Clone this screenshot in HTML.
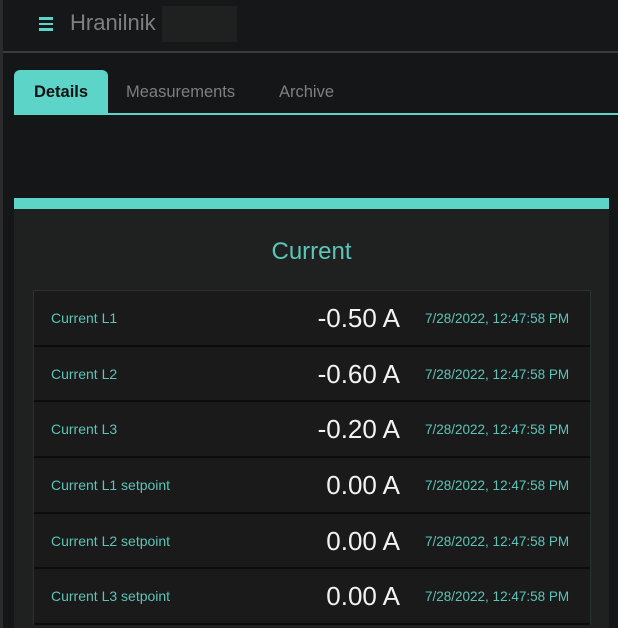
<!DOCTYPE html>
<html><head><style>
*{margin:0;padding:0;box-sizing:border-box}
html,body{width:618px;height:628px;overflow:hidden}
body{background:#151617;font-family:"Liberation Sans",sans-serif;position:relative}
.lb{position:absolute;left:0;top:0;width:3px;height:628px;background:#2a2b2c}
.hdr{position:absolute;left:3px;top:0;right:0;height:53px;background:#161718;border-bottom:2px solid #3a3b3c}
.ham{position:absolute;left:36px;top:17px;width:14px}
.ham i{display:block;height:2.5px;background:#5cd4c8;margin-bottom:3px}
.ttl{position:absolute;left:67px;top:10px;font-size:22px;color:#7d7f80}
.blur{position:absolute;left:159px;top:6px;width:75px;height:36px;background:#1f2020}
.tabs{position:absolute;left:14px;top:70px;right:0;height:45px;border-bottom:2px solid #5cd4c8}
.tab{position:absolute;top:0;height:43px;line-height:45px;font-size:16.5px;color:#7d7f80}
.act{left:0;width:94px;background:#5cd4c8;color:#111;font-weight:bold;text-align:center;border-radius:6px 6px 0 0}
.card{position:absolute;left:14px;top:198px;width:595px;height:430px;background:#1f2120;border-top:11px solid #5cd4c8}
.h{position:absolute;left:0;right:0;top:29px;text-align:center;font-size:24px;color:#5cc4b8}
.tbl{position:absolute;left:19px;top:81px;width:558px;border:1px solid #2b3331;border-bottom:none}
.r{height:55.7px;background:#1a1a1a;border-bottom:2px solid #0c0c0c;position:relative}
.l{position:absolute;left:17px;top:19px;font-size:14px;color:#5cc4b8}
.v{position:absolute;right:190px;top:12px;font-size:26px;color:#f2f2f2}
.d{position:absolute;left:391px;top:20px;font-size:13.5px;color:#5cc4b8}
</style></head><body>
<div class="lb"></div>
<div class="hdr"><div class="ham"><i></i><i></i><i></i></div><div class="ttl">Hranilnik</div><div class="blur"></div></div>
<div class="tabs"><div class="tab act">Details</div><div class="tab" style="left:112px">Measurements</div><div class="tab" style="left:265px">Archive</div></div>
<div class="card"><div class="h">Current</div>
<div class="tbl">
<div class="r"><span class="l">Current L1</span><span class="v">-0.50 A</span><span class="d">7/28/2022, 12:47:58 PM</span></div>
<div class="r"><span class="l">Current L2</span><span class="v">-0.60 A</span><span class="d">7/28/2022, 12:47:58 PM</span></div>
<div class="r"><span class="l">Current L3</span><span class="v">-0.20 A</span><span class="d">7/28/2022, 12:47:58 PM</span></div>
<div class="r"><span class="l">Current L1 setpoint</span><span class="v">0.00 A</span><span class="d">7/28/2022, 12:47:58 PM</span></div>
<div class="r"><span class="l">Current L2 setpoint</span><span class="v">0.00 A</span><span class="d">7/28/2022, 12:47:58 PM</span></div>
<div class="r"><span class="l">Current L3 setpoint</span><span class="v">0.00 A</span><span class="d">7/28/2022, 12:47:58 PM</span></div>
</div></div>
</body></html>
